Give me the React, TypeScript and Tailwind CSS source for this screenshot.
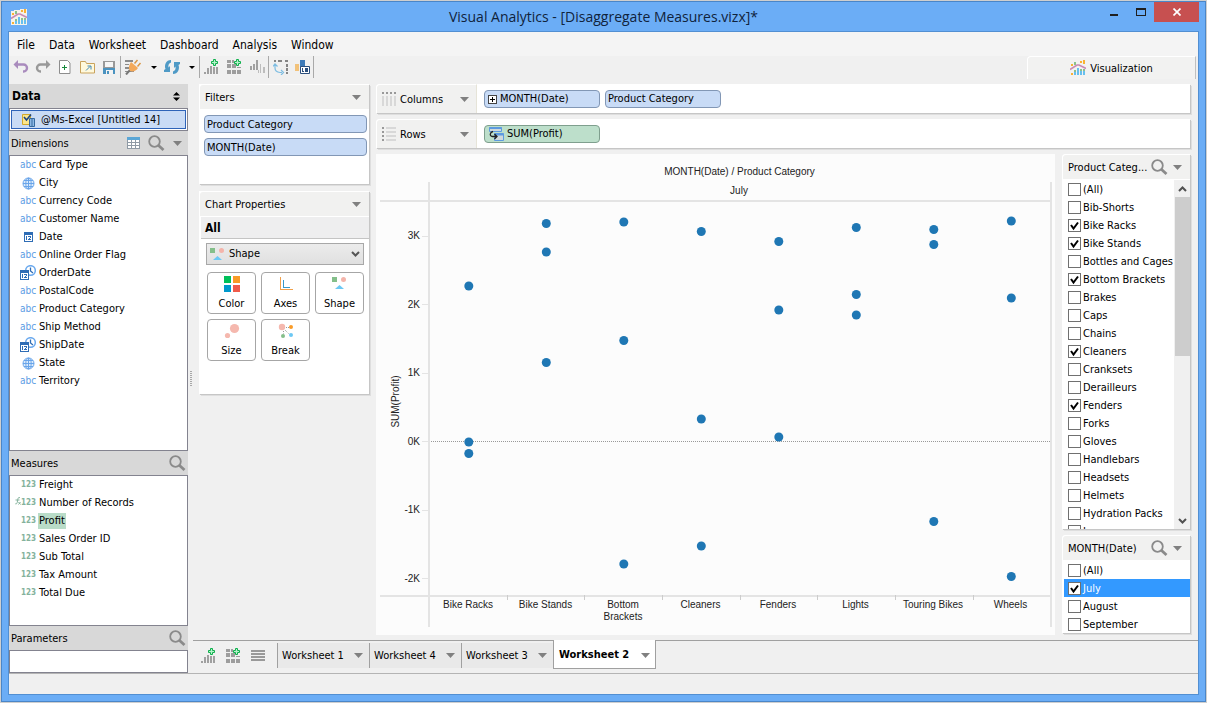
import type { ReactNode } from 'react';

const DIMENSIONS = [
  { name: 'Card Type', type: 'abc' },
  { name: 'City', type: 'geo' },
  { name: 'Currency Code', type: 'abc' },
  { name: 'Customer Name', type: 'abc' },
  { name: 'Date', type: 'date' },
  { name: 'Online Order Flag', type: 'abc' },
  { name: 'OrderDate', type: 'datetime' },
  { name: 'PostalCode', type: 'abc' },
  { name: 'Product Category', type: 'abc' },
  { name: 'Ship Method', type: 'abc' },
  { name: 'ShipDate', type: 'datetime' },
  { name: 'State', type: 'geo' },
  { name: 'Territory', type: 'abc' },
];

const MEASURES = [
  'Freight',
  'Number of Records',
  'Profit',
  'Sales Order ID',
  'Sub Total',
  'Tax Amount',
  'Total Due',
];

const CATEGORIES = [
  '(All)', 'Bib-Shorts', 'Bike Racks', 'Bike Stands', 'Bottles and Cages', 'Bottom Brackets',
  'Brakes', 'Caps', 'Chains', 'Cleaners', 'Cranksets', 'Derailleurs', 'Fenders', 'Forks',
  'Gloves', 'Handlebars', 'Headsets', 'Helmets', 'Hydration Packs', 'Jerseys',
];
const CHECKED = ['Bike Racks', 'Bike Stands', 'Bottom Brackets', 'Cleaners', 'Fenders'];

const MONTHS = ['(All)', 'July', 'August', 'September'];

// y positions are in chart units
const SERIES = [
  { label: ['Bike Racks'], points: [132, 288, 299.5] },
  { label: ['Bike Stands'], points: [69.5, 98, 208.5] },
  { label: ['Bottom', 'Brackets'], points: [68, 186.5, 410] },
  { label: ['Cleaners'], points: [77.5, 265, 392] },
  { label: ['Fenders'], points: [87.5, 156, 283] },
  { label: ['Lights'], points: [73.5, 140.5, 161] },
  { label: ['Touring Bikes'], points: [75.5, 90.5, 367.5] },
  { label: ['Wheels'], points: [67, 144, 422.5] },
];
const TICKS = ['3K', '2K', '1K', '0K', '-1K', '-2K'];

const Caret = ({ dark = false }: { dark?: boolean }) => (
  <svg width="9" height="5" viewBox="0 0 9 5" className={dark ? 'fill-black' : 'fill-[#808080]'}>
    <path d={dark ? 'M2 1h6L5 4z' : 'M0 0h9L4.500 5z'} />
  </svg>
);

const SearchIcon = () => (
  <svg width="17" height="17" viewBox="0 0 17 17" fill="none" stroke="#8a8a8a">
    <circle cx="6.500" cy="6.500" r="5.300" strokeWidth="1.800" />
    <path d="M10.300 10.300L15.500 15" strokeWidth="2.800" />
  </svg>
);

const LogoIcon = ({ boxed = false }: { boxed?: boolean }) => (
  <svg width="16" height="16" viewBox="0 0 16 16">
    {boxed && <path d="M0 2h3V1h6V0h7v16H0z" fill="#f6f2ea" />}
    <path d="M1 4h2v2H1zM10 1h2v2h-2zM13 0h2v4h-2zM1 13h2v2H1z" fill="#f9b233" />
    <path d="M4 2h2v3H4zM4 10h2v2H4zM10 9h2v2h-2zM13 9h2v2h-2z" fill="#8cc08c" />
    <path d="M4 12h2v3H4zM7 8h2v7H7zM10 11h2v4h-2zM13 11h2v4h-2z" fill="#67bfee" />
    <path d="M0 9.500L7 5h2L16 8.500" fill="none" stroke="#c98ab4" strokeWidth="1.600" />
  </svg>
);

const Plus = ({ x, y }: { x: number; y: number }) => (
  <path
    transform={`translate(${x} ${y})`}
    d="M2.500 .5h2v2h2v2h-2v2h-2v-2h-2v-2h2z"
    fill="#b7f0cc"
    stroke="#0db14b"
  />
);

const AddChartIcon = () => (
  <svg width="16" height="16" viewBox="0 0 16 16">
    <path d="M0 13h2v2H0zM3 9h2v6H3zM6 7h2v8H6zM9 8h2v7H9zM12 8h2v7h-2z" fill="#a0a0a0" />
    <Plus x={7} y={0} />
  </svg>
);

const AddDashboardIcon = () => (
  <svg width="16" height="16" viewBox="0 0 16 16">
    <path d="M0 1h4v3H0zM5 1h2v3H5zM0 5h4v4H0zM5 5h4v4H5zM10 8h4v1h-4zM0 11h4v4H0zM5 11h4v4H5zM10 11h4v4h-4z" fill="#9d9d9d" />
    <Plus x={7} y={0} />
  </svg>
);

const ShapeIcon = () => (
  <svg width="15" height="14" viewBox="0 0 15 14">
    <path d="M0 1h5v5H0z" fill="#84bf8a" />
    <circle cx="11.500" cy="3.500" r="2.500" fill="#f4b4aa" />
    <path d="M7.500 9L12 13H3z" fill="#6cc8f4" />
  </svg>
);

const AbcIcon = () => (
  <span className="font-['DejaVu_Sans_Condensed'] text-[10px] leading-[14px] text-[#5b9de4]">abc</span>
);

const CalendarShape = ({ x, y }: { x: number; y: number }) => (
  <g transform={`translate(${x} ${y})`} shapeRendering="crispEdges">
    <path d="M0 0h9v10H0z" fill="#2f6db5" />
    <path d="M1 3h7v6H1z" fill="#fff" />
    <path d="M2 4h1v4H2zM4 4h3v1H4zM6 5h1v1H6zM5 6h1v1H5zM4 7h3v1H4z" fill="#2f6db5" />
  </g>
);

const TypeIcon = ({ type }: { type: string }) => {
  if (type === 'abc') return <AbcIcon />;
  if (type === 'geo')
    return (
      <svg width="13" height="13" viewBox="0 0 13 13" fill="none" stroke="#69a5ea">
        <circle cx="6.500" cy="6.500" r="5.500" fill="#dcebfb" />
        <ellipse cx="6.500" cy="6.500" rx="2.700" ry="5.500" />
        <path d="M6.500 1v11M1 6.500h11M2 3.500h9M2 9.500h9" />
      </svg>
    );
  if (type === 'date')
    return (
      <svg width="11" height="12" viewBox="0 0 11 12">
        <CalendarShape x={1} y={1} />
      </svg>
    );
  return (
    <svg width="16" height="16" viewBox="0 0 16 16">
      <circle cx="10.500" cy="5.500" r="4.800" fill="#fff" stroke="#6aa9ee" strokeWidth="1.500" />
      <path d="M10.500 2.500v3.500l2.500 2" fill="none" stroke="#2f6db5" strokeWidth="1.300" />
      <CalendarShape x={0} y={5} />
    </svg>
  );
};

const Divider = () => <span className="h-[22px] w-px shrink-0 bg-[#a9a9a9]" />;

const ToolButton = ({ label, wide = false, children }: { label: string; wide?: boolean; children: ReactNode }) => (
  <button type="button" aria-label={label} className={`flex h-5 items-center justify-center ${wide ? 'w-6' : 'w-[22px]'}`}>
    {children}
  </button>
);

const TitleBar = () => (
  <header className="grid h-[29px] shrink-0 grid-cols-[1fr_auto_1fr]">
    <div className="flex items-center pl-[9px]">
      <LogoIcon boxed />
    </div>
    <h1 className="self-center font-['Open_Sans',sans-serif] text-[14px] leading-5 text-[#10233c]">
      Visual Analytics - [Disaggregate Measures.vizx]*
    </h1>
    <div className="flex items-start justify-end pr-[6px]">
      <button type="button" aria-label="Minimize" className="flex h-5 w-[26px] items-center justify-center">
        <svg width="8" height="8" viewBox="0 0 8 8"><path d="M0 6h8v2H0z" fill="#1f1f1f" /></svg>
      </button>
      <button type="button" aria-label="Maximize" className="flex h-5 w-[27px] items-center justify-center">
        <svg width="10" height="9" viewBox="0 0 10 9"><path d="M0 0h10v8H0zM1 2v5h8V2z" fill="#1f1f1f" fillRule="evenodd" /></svg>
      </button>
      <button type="button" aria-label="Close" className="flex h-5 w-[45px] items-center justify-center bg-[#c75050]">
        <svg width="8" height="8" viewBox="0 0 8 8"><path d="M.5 .5l7 7M7.500 .5l-7 7" stroke="#fff" strokeWidth="1.700" /></svg>
      </button>
    </div>
  </header>
);

const Toolbar = () => (
  <div className="flex h-7 shrink-0 items-start justify-between">
    <div className="flex items-center pl-px">
      <ToolButton label="Undo">
        <svg width="16" height="16" viewBox="0 0 16 16" fill="none" stroke="#a98bbd">
          <path d="M3 5.500h7.500a3.500 3.500 0 010 7H10" strokeWidth="2.400" />
          <path d="M5 1v9L.5 5.500z" fill="#a98bbd" stroke="none" />
        </svg>
      </ToolButton>
      <ToolButton label="Redo">
        <svg width="16" height="16" viewBox="0 0 16 16" fill="none" stroke="#999">
          <path d="M13 5.500H5.500a3.500 3.500 0 000 7H6" strokeWidth="2.400" />
          <path d="M11 1v9l4.500-4.500z" fill="#999" stroke="none" />
        </svg>
      </ToolButton>
      <ToolButton label="New">
        <svg width="12" height="14" viewBox="0 0 12 14">
          <path d="M.5 .5h8l2.500 2.500v10.500H.5z" fill="#fff" stroke="#8d8d8d" />
          <path d="M5 5h1v2h2v1H6v2H5V8H3V7h2z" fill="#188a3c" />
        </svg>
      </ToolButton>
      <ToolButton label="Open">
        <svg width="15" height="14" viewBox="0 0 15 14">
          <path d="M.5 1.500h5l1 2h8v9.500H.5z" fill="#fff9dc" stroke="#c9a35c" />
          <path d="M6 10.500L10 6.500M7.500 6H11v3.500" fill="none" stroke="#3e88b8" />
        </svg>
      </ToolButton>
      <ToolButton label="Save">
        <svg width="12" height="13" viewBox="0 0 12 13" shapeRendering="crispEdges">
          <path d="M0 0h12v7H0z" fill="#999" />
          <path d="M2 1h8v5H2z" fill="#f6f6f6" />
          <path d="M0 7h12v6H0z" fill="#4b93c0" />
          <path d="M3 9h7v4H3z" fill="#f3f3f3" />
          <path d="M4 10h2v3H4z" fill="#4b93c0" />
        </svg>
      </ToolButton>
      <Divider />
      <ToolButton label="Connect" wide>
        <svg width="17" height="16" viewBox="0 0 17 16">
          <path d="M0 1h8v2H0zM0 5h4v1H0zM0 8h4v2H0zM0 12h9v1H0z" fill="#8c8c8c" />
          <path d="M1 15.500L5 11" stroke="#777" strokeWidth="2" />
          <path d="M9.500 4.500L12.500 1M12.500 7.500L15.500 4" stroke="#d99745" strokeWidth="1.500" />
          <path d="M6 3l7 6c-2 3-5 4-8 3-2-3-1-6 1-9z" fill="#f3a95a" />
        </svg>
      </ToolButton>
      <button type="button" aria-label="Connect options" className="flex h-5 w-4 items-center justify-center"><Caret dark /></button>
      <ToolButton label="Refresh">
        <svg width="16" height="16" viewBox="0 0 16 16" fill="#4f9ac6">
          <path d="M7 1C2 1 0 6 1.500 10L0 11v2h6V7L4.500 8.500C4 6 5 4 7 3.500z" />
          <path d="M9 15c5 0 7-5 5.500-9L16 5V3h-6v6l1.500-1.500c.5 2.500-.5 4.500-2.500 5z" />
        </svg>
      </ToolButton>
      <button type="button" aria-label="Refresh options" className="flex h-5 w-4 items-center justify-center"><Caret dark /></button>
      <Divider />
      <ToolButton label="New worksheet" wide><AddChartIcon /></ToolButton>
      <ToolButton label="New dashboard"><AddDashboardIcon /></ToolButton>
      <ToolButton label="Bars">
        <svg width="15" height="14" viewBox="0 0 15 14">
          <path d="M0 6h2v4H0zM3 4h2v6H3zM6 0h2v10H6z" fill="#a0a0a0" />
          <path d="M8 10h1v3H8zM10 4h1v9h-1zM13 7h2v6h-2z" fill="#bdbdbd" />
        </svg>
      </ToolButton>
      <Divider />
      <ToolButton label="Swap axes">
        <svg width="15" height="15" viewBox="0 0 15 15">
          <path d="M1 0h2v2H1zM5 0h4v2H5zM12 0h3v2h-3zM13 4h2v3h-2zM13 8h2v3h-2zM13 12h2v2h-2z" fill="#858585" />
          <path d="M2 5v3q0 4 5 4.500h2M0 6.500L2 4l2.500 2.500M8 10l2.500 2.500L8 15" stroke="#7dbde2" strokeWidth="1.200" fill="none" />
        </svg>
      </ToolButton>
      <ToolButton label="Labels">
        <svg width="15" height="14" viewBox="0 0 15 14">
          <path d="M0 4h4v7H0z" fill="#f2c27a" /><path d="M5 0h5v11H5z" fill="#3d7ab8" />
          <path d="M5.500 6.500h9v7h-9z" fill="#fff" stroke="#2b4f7d" />
          <path d="M7 8h1v3h1v1H7zM10 8h3v4h-3z" fill="#2b4f7d" />
        </svg>
      </ToolButton>
      <Divider />
    </div>
    <button type="button" className="mr-0.5 flex h-[23px] w-[169px] items-center justify-center gap-1 rounded-tl border-t border-r border-l border-white border-r-[#c0c0c0] bg-[#f2f2f1]">
      <LogoIcon />
      <span className="pt-0.5">Visualization</span>
    </button>
  </div>
);

const SectionHeader = ({ title, table = false }: { title: string; table?: boolean }) => (
  <div className="flex h-6 shrink-0 items-center justify-between bg-[#d8d8d8] pr-0.5 pl-0.5">
    <h2 className="pt-px">{title}</h2>
    <div className="flex items-center gap-2">
      {table && (
        <button type="button" aria-label="View data">
          <svg width="13" height="12" viewBox="0 0 13 12" shapeRendering="crispEdges">
            <path d="M0 0h13v12H0z" fill="#8f9aa5" />
            <path d="M0 0h13v3H0z" fill="#5ba6d6" />
            <path d="M1 3h3v2H1zM5 3h3v2H5zM9 3h3v2H9zM1 6h3v2H1zM5 6h3v2H5zM9 6h3v2H9zM1 9h3v2H1zM5 9h3v2H5zM9 9h3v2H9z" fill="#fff" />
          </svg>
        </button>
      )}
      <button type="button" aria-label={`Search ${title}`}><SearchIcon /></button>
      {table && <button type="button" aria-label="Dimension options" className="mr-1"><Caret /></button>}
    </div>
  </div>
);

const DataPanel = () => (
  <aside className="flex w-[179px] shrink-0 flex-col">
    <div className="flex h-6 shrink-0 items-center justify-between bg-[#d8d8d8] pr-2 pl-[3px]">
      <h2 className="text-[12px] font-bold">Data</h2>
      <svg width="7" height="9" viewBox="0 0 7 9"><path d="M0 3.500h7L3.500 0zM0 5.500h7L3.500 9z" /></svg>
    </div>
    <div className="h-[23px] shrink-0 border border-[#83838f] bg-white p-px">
      <button type="button" className="flex h-full w-full items-center gap-[5px] border border-[#2e63b8] bg-[#c9dbf5] pl-2.5">
        <svg width="14" height="14" viewBox="0 0 14 14">
          <path d="M.5 1.500h8v10h-8z" fill="#fbe68b" stroke="#d2a92c" />
          <path d="M2 4l2.500 3L9 1.500" fill="none" stroke="#1d4580" strokeWidth="1.600" />
          <path d="M7.500 5.500h5v8h-5z" fill="#8cb8e6" stroke="#35689e" />
          <path d="M10 6v7" stroke="#35689e" />
        </svg>
        @Ms-Excel [Untitled 14]
      </button>
    </div>
    <SectionHeader title="Dimensions" table />
    <ul className="min-h-0 flex-1 overflow-hidden border border-[#83838f] bg-white">
      {DIMENSIONS.map((d) => (
        <li key={d.name} className="flex h-[18px] items-center gap-[3px] pl-2.5">
          <span className="flex w-4 justify-center"><TypeIcon type={d.type} /></span>
          {d.name}
        </li>
      ))}
    </ul>
    <SectionHeader title="Measures" />
    <ul className="h-[151px] shrink-0 border border-[#83838f] bg-white">
      {MEASURES.map((m) => (
        <li key={m} className="flex h-[18px] items-center">
          <span className="flex w-[26px] items-center justify-end font-['DejaVu_Sans_Condensed'] text-[8px] font-bold text-[#84b29c]">
            {m === 'Number of Records' && (
              <svg width="6" height="8" viewBox="0 0 6 8" className="mb-1" fill="none" stroke="#84b29c">
                <path d="M5 .7C3 0 2.800 1.500 2.500 4S1.500 7.300 .3 6.800M.5 3h4M3.500 5l2 2.500M5.500 5l-2 2.500" />
              </svg>
            )}
            123
          </span>
          <span className={m === 'Profit' ? 'ml-0.5 bg-[#b9dcc8] px-px leading-4' : 'ml-[3px]'}>{m}</span>
        </li>
      ))}
    </ul>
    <SectionHeader title="Parameters" />
    <div className="h-[23px] shrink-0 border border-[#83838f] bg-white" />
  </aside>
);

const CardHeader = ({ title, search = false }: { title: string; search?: boolean }) => (
  <div className="flex h-[25px] shrink-0 items-center justify-between rounded-tl border-t border-l border-white bg-[#f1f1f0] pr-2 pl-[5px]">
    <h2 className="pt-0.5 whitespace-nowrap">{title}</h2>
    <div className="flex items-center gap-[5px]">
      {search && <button type="button" aria-label={`Search ${title}`}><SearchIcon /></button>}
      <button type="button" aria-label={`${title} options`}><Caret /></button>
    </div>
  </div>
);

const Chip = ({ children, green = false }: { children: ReactNode; green?: boolean }) => (
  <button
    type="button"
    className={`flex h-[18px] items-center gap-[3px] rounded border px-0.5 pt-px text-left ${
      green ? 'border-[#7f9f8e] bg-[#bddfcb]' : 'border-[#8297b5] bg-[#c8dbf6]'
    }`}
  >
    {children}
  </button>
);

const PROPERTY_ICONS: { name: string; icon: ReactNode }[] = [
  {
    name: 'Color',
    icon: (
      <svg width="16" height="16" viewBox="0 0 16 16">
        <path d="M0 0h7v7H0z" fill="#00c05a" /><path d="M9 0h7v7H9z" fill="#f99b27" />
        <path d="M0 9h7v7H0z" fill="#0099cc" /><path d="M9 9h7v7H9z" fill="#ef5b4b" />
      </svg>
    ),
  },
  {
    name: 'Axes',
    icon: (
      <svg width="16" height="16" viewBox="0 0 16 16" fill="none" shapeRendering="crispEdges">
        <path d="M2.500 1v12.500H15" stroke="#f0a04a" /><path d="M5.500 4v7.500H12" stroke="#3798c8" />
      </svg>
    ),
  },
  { name: 'Shape', icon: <ShapeIcon /> },
  {
    name: 'Size',
    icon: (
      <svg width="16" height="16" viewBox="0 0 16 16" fill="#f5b8ae">
        <circle cx="10.500" cy="5.500" r="4.600" /><circle cx="3.500" cy="12.500" r="2.600" />
      </svg>
    ),
  },
  {
    name: 'Break',
    icon: (
      <svg width="16" height="16" viewBox="0 0 16 16">
        <circle cx="4" cy="4" r="3.200" fill="#f5b8ae" /><circle cx="13" cy="4" r="2" fill="#f99b27" />
        <circle cx="5" cy="13" r="2" fill="#84bf8a" /><circle cx="13" cy="12" r="2" fill="#6cc8f4" />
        <path d="M8 4.500h3M7 7l3.500 3.500M5.500 8v2.500" stroke="#999" strokeDasharray="1 1" />
      </svg>
    ),
  },
];

const PropertiesColumn = () => (
  <div className="mr-[7px] flex w-[170px] shrink-0 flex-col gap-[7px]">
    <section className="h-[100px] bg-white shadow-[1px_1px_0_#c6c6c6,2px_2px_0_#dedede]">
      <CardHeader title="Filters" />
      <div className="flex flex-col gap-[5px] pt-1.5 pr-0.5 pl-[5px]">
        <Chip>Product Category</Chip>
        <Chip>MONTH(Date)</Chip>
      </div>
    </section>
    <section className="h-[203px] bg-white shadow-[1px_1px_0_#c6c6c6,2px_2px_0_#dedede]">
      <CardHeader title="Chart Properties" />
      <h3 className="mt-px ml-0.5 h-[22px] border-b border-[#c4c4c4] bg-[#eeeeef] pl-1 text-[12px] leading-[22px] font-bold">All</h3>
      <div className="pt-1 pr-[5px] pl-[7px]">
        <div className="relative h-[22px]">
          <select aria-label="Chart type" className="h-full w-full appearance-none border border-[#a8a8a8] bg-linear-to-b from-[#ececec] to-[#e0e0e0] pl-[22px] outline-none">
            <option>Shape</option>
            <option>Bar</option>
            <option>Line</option>
          </select>
          <span className="pointer-events-none absolute top-1 left-1"><ShapeIcon /></span>
          <svg className="pointer-events-none absolute top-2 right-1" width="9" height="7" viewBox="0 0 9 7">
            <path d="M1 1l3.500 3.500L8 1" fill="none" stroke="#555" strokeWidth="2" />
          </svg>
        </div>
        <div className="mt-[7px] ml-px grid grid-cols-[repeat(3,49px)] gap-[5px]">
          {PROPERTY_ICONS.map((p) => (
            <button key={p.name} type="button" className="flex h-[42px] flex-col items-center justify-between rounded border border-[#a6a6a6] bg-white pt-[3px] pb-0.5">
              {p.icon}
              {p.name}
            </button>
          ))}
        </div>
      </div>
    </section>
  </div>
);

const Shelf = ({ title, icon, children }: { title: string; icon: ReactNode; children: ReactNode }) => (
  <section className="flex h-[29px] shrink-0 rounded-tl bg-white shadow-[1px_1px_0_#c6c6c6,2px_2px_0_#dedede]">
    <div className="flex w-[101px] items-center rounded-tl border-t border-r border-l border-white border-r-[#e6e4d8] bg-[#f1f1f0] pr-[7px] pl-[5px]">
      {icon}
      <h2 className="ml-1 flex-1 pt-px">{title}</h2>
      <button type="button" aria-label={`${title} options`}><Caret /></button>
    </div>
    <div className="grid grid-cols-[116px_116px] items-center gap-[5px] pl-[7px]">{children}</div>
  </section>
);

const Chart = () => (
  <div className="min-w-0 flex-1 bg-[#fcfcfc]">
    <svg className="block h-full w-full font-['Liberation_Sans',sans-serif] text-[10px]" viewBox="0 0 679 481" fill="#222">
      <g shapeRendering="crispEdges" fill="#e4e4e4">
        <path d="M4 46h671v2H4zM4 441h671v2H4zM52 28h2v445h-2zM674 28h2v445h-2z" />
        {TICKS.map((t, i) => (
          <path key={t} d={`M46 ${Math.round(81.500 + i * 68.500)}h7v1h-7z`} />
        ))}
        {SERIES.slice(1).map((s, i) => (
          <path key={s.label[0]} d={`M${Math.round(130.500 + i * 77.700)} 441h1v5h-1z`} fill="#ccc" />
        ))}
      </g>
      <path d="M55 287.500h619" stroke="#999" strokeDasharray="1 1" />
      <text x="363.500" y="21" textAnchor="middle">MONTH(Date) / Product Category</text>
      <text x="363" y="40" textAnchor="middle">July</text>
      <text transform="translate(23 247.500) rotate(-90)" textAnchor="middle">SUM(Profit)</text>
      {TICKS.map((t, i) => (
        <text key={t} x="44" y={Math.round(85 + i * 68.500)} textAnchor="end">{t}</text>
      ))}
      {SERIES.map((s, i) => (
        <g key={s.label[0]}>
          {s.points.map((y) => (
            <circle key={y} cx={92.800 + i * 77.500} cy={y} r="4.500" fill="#1f77b4" />
          ))}
          {s.label.map((line, row) => (
            <text key={line} x={92 + i * 77.500} y={454 + row * 12} textAnchor="middle">{line}</text>
          ))}
        </g>
      ))}
    </svg>
  </div>
);

const CheckRow = ({ label, checked = false, selected = false }: { label: string; checked?: boolean; selected?: boolean }) => (
  <label className={`flex h-[18px] shrink-0 items-center gap-0.5 pl-1 whitespace-nowrap ${selected ? 'bg-[#3399ff] text-white' : ''}`}>
    <span className="relative flex">
      <input type="checkbox" defaultChecked={checked} className="peer h-[13px] w-[13px] appearance-none border border-[#707070] bg-white" />
      <svg className="pointer-events-none absolute top-0 left-0 hidden peer-checked:block" width="13" height="13" viewBox="0 0 13 13">
        <path d="M3 6l2.500 3.500L10 3.500" fill="none" stroke="#000" strokeWidth="2" />
      </svg>
    </span>
    <span className="pt-px">{label}</span>
  </label>
);

const FilterColumn = () => (
  <div className="flex w-32 shrink-0 flex-col gap-1.5 pb-0.5">
    <section className="flex min-h-0 flex-1 flex-col rounded-tl bg-white shadow-[1px_1px_0_#c6c6c6,2px_2px_0_#dedede]">
      <CardHeader title="Product Categ..." search />
      <div className="flex min-h-0 flex-1 pt-px">
        <div className="flex min-w-0 flex-1 flex-col overflow-hidden pl-0.5">
          {CATEGORIES.map((c) => (
            <CheckRow key={c} label={c} checked={CHECKED.includes(c)} />
          ))}
        </div>
        <div className="flex w-4 shrink-0 flex-col items-center bg-[#f0f0f0]">
          <button type="button" aria-label="Scroll up" className="flex h-[17px] w-full items-center justify-center">
            <svg width="9" height="6" viewBox="0 0 9 6"><path d="M1 5l3.500-3.500L8 5" fill="none" stroke="#505050" strokeWidth="2" /></svg>
          </button>
          <div className="h-[159px] w-[15px] bg-[#cdcdcd]" />
          <button type="button" aria-label="Scroll down" className="mt-auto flex h-[17px] w-full items-center justify-center">
            <svg width="9" height="6" viewBox="0 0 9 6"><path d="M1 1l3.500 3.500L8 1" fill="none" stroke="#505050" strokeWidth="2" /></svg>
          </button>
        </div>
      </div>
    </section>
    <section className="flex shrink-0 flex-col rounded-tl bg-white shadow-[1px_1px_0_#c6c6c6,2px_2px_0_#dedede]">
      <CardHeader title="MONTH(Date)" search />
      <div className="flex flex-col pt-px pl-0.5">
        {MONTHS.map((m) => (
          <CheckRow key={m} label={m} checked={m === 'July'} selected={m === 'July'} />
        ))}
      </div>
    </section>
  </div>
);

const SheetTabs = () => (
  <nav className="ml-[5px] flex h-[33px] shrink-0 items-start border-t border-[#a0a0a0]">
    <div className="flex h-[30px] w-[84px] items-center gap-[9px] pl-2">
      <button type="button" aria-label="New worksheet"><AddChartIcon /></button>
      <button type="button" aria-label="New dashboard"><AddDashboardIcon /></button>
      <button type="button" aria-label="List sheets">
        <svg width="14" height="12" viewBox="0 0 14 12"><path d="M0 0h14v2H0zM0 3h14v2H0zM0 6h14v2H0zM0 9h14v2H0z" fill="#999" /></svg>
      </button>
    </div>
    {['Worksheet 1', 'Worksheet 4', 'Worksheet 3'].map((name) => (
      <button key={name} type="button" className="mt-0.5 flex h-[25px] w-[92px] items-center justify-between border-l border-[#a0a0a0] bg-[#e9e9e9] pr-1.5 pl-1">
        {name}
        <Caret />
      </button>
    ))}
    <button type="button" className="-mt-px flex h-[29px] w-[103px] items-center justify-between border border-t-0 border-[#a0a0a0] bg-white pt-0.5 pr-[5px] pl-[5px] font-bold">
      Worksheet 2
      <Caret />
    </button>
  </nav>
);

const App = () => {
  return (
    <div className="h-screen min-h-[600px] border border-[#cfcfcf] font-['DejaVu_Sans_Condensed','DejaVu_Sans',sans-serif] text-[11px] leading-[14px] text-black">
      <div className="flex h-full flex-col border border-[#4a86c8] bg-[#6badf6]">
        <TitleBar />
        <main className="mx-1.5 mb-1.5 flex min-h-0 flex-1 flex-col border border-[#528fd2] bg-[#f0f0f0]">
          <nav className="flex h-6 shrink-0 items-center gap-[14px] bg-[#f4f4f4] pt-0.5 pl-2 text-[12px]">
            {['File', 'Data', 'Worksheet', 'Dashboard', 'Analysis', 'Window'].map((m) => (
              <button key={m} type="button">{m}</button>
            ))}
          </nav>
          <Toolbar />
          <div className="flex min-h-0 flex-1">
            <DataPanel />
            <div className="flex min-w-0 flex-1 flex-col">
              <div className="flex min-h-0 flex-1 pr-2 pb-[5px]">
                <div className="flex w-[11px] shrink-0 items-center pt-[37px] pl-0.5">
                  <svg width="2" height="15" viewBox="0 0 2 15"><path d="M1 0v15" stroke="#a8a8a8" strokeWidth="2" strokeDasharray="1 1" /></svg>
                </div>
                <PropertiesColumn />
                <div className="flex min-w-0 flex-1 flex-col gap-1.5">
                  <Shelf
                    title="Columns"
                    icon={
                      <svg width="14" height="14" viewBox="0 0 14 14">
                        <path d="M0 0h2v2H0zM4 0h2v2H4zM8 0h2v2H8zM12 0h2v2h-2z" fill="#999" />
                        <path d="M0 4h2v10H0zM4 4h2v10H4zM8 4h2v10H8zM12 4h2v10h-2z" fill="#d8d8d8" />
                      </svg>
                    }
                  >
                    <Chip>
                      <svg className="ml-px" width="9" height="9" viewBox="0 0 9 9" shapeRendering="crispEdges">
                        <path d="M.5 .5h8v8h-8z" fill="#fff" stroke="#444" /><path d="M2 4h5v1H2zM4 2h1v5H4z" />
                      </svg>
                      MONTH(Date)
                    </Chip>
                    <Chip>Product Category</Chip>
                  </Shelf>
                  <Shelf
                    title="Rows"
                    icon={
                      <svg width="14" height="14" viewBox="0 0 14 14">
                        <path d="M0 0h2v2H0zM0 4h2v2H0zM0 8h2v2H0zM0 12h2v2H0z" fill="#999" />
                        <path d="M4 0h10v2H4zM4 4h10v2H4zM4 8h10v2H4zM4 12h10v2H4z" fill="#d8d8d8" />
                      </svg>
                    }
                  >
                    <Chip green>
                      <svg className="ml-0.5" width="15" height="14" viewBox="0 0 15 14">
                        <path d="M.5 .5h12v4H.5zM5.500 6.500h9v7h-9z" fill="#cfd9dc" stroke="#5c9ae0" />
                        <path d="M.5 1h12M5.500 7.500h9" stroke="#5c9ae0" strokeWidth="2" />
                        <path d="M4 4.500C1 5 0 9 3.500 9.500H8M5.500 7L8 9.500 5.500 12" fill="none" stroke="#222" strokeWidth="1.300" />
                      </svg>
                      SUM(Profit)
                    </Chip>
                  </Shelf>
                  <div className="flex min-h-0 flex-1 gap-[7px]">
                    <Chart />
                    <FilterColumn />
                  </div>
                </div>
              </div>
              <SheetTabs />
            </div>
          </div>
          <footer className="h-[21px] shrink-0 border-t border-[#b4b4b4]" />
        </main>
      </div>
    </div>
  );
};

export default App;
